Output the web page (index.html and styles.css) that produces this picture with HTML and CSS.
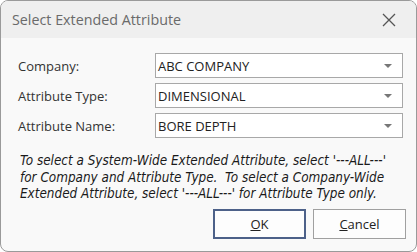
FILE: index.html
```html
<!DOCTYPE html>
<html lang="en">
<head>
    <meta charset="UTF-8">
    <title>Select Extended Attribute</title>
    <link rel="stylesheet" href="styles.css">
</head>
<body>
    <div class="dialog">
        <div class="titlebar">
            <span class="title">Select Extended Attribute</span>
            <span class="close">
                <svg width="14" height="14" viewBox="0 0 14 14"><path d="M1 1 L13 13 M13 1 L1 13" stroke="#555" stroke-width="1.3" fill="none"/></svg>
            </span>
        </div>
        <div class="content">
            <div class="form-row">
                <label>Company:</label>
                <div class="select"><span>ABC COMPANY</span><i class="arrow"></i></div>
            </div>
            <div class="form-row">
                <label>Attribute Type:</label>
                <div class="select"><span>DIMENSIONAL</span><i class="arrow"></i></div>
            </div>
            <div class="form-row">
                <label>Attribute Name:</label>
                <div class="select"><span>BORE DEPTH</span><i class="arrow"></i></div>
            </div>
            <p class="note">To select a System-Wide Extended Attribute, select '---ALL---' for Company and Attribute Type.&nbsp; To select a Company-Wide Extended Attribute, select '---ALL---' for Attribute Type only.</p>
            <div class="buttons">
                <button class="default"><u>O</u>K</button>
                <button><u>C</u>ancel</button>
            </div>
        </div>
    </div>
</body>
</html>
```

FILE: styles.css
```css
body {
    margin: 0;
    background: #ffffff;
    font-family: "Open Sans", "Noto Sans", sans-serif;
    color: #222;
}

.dialog {
    width: 415px;
    height: 250px;
    border: 1px solid #9a9a9a;
    border-radius: 8px;
    background: #f9f9f9;
    overflow: hidden;
}

.titlebar {
    height: 37px;
    background: #efefef;
    display: flex;
    align-items: center;
    justify-content: space-between;
    padding: 0 20px 0 11px;
}

.title {
    font-size: 14.3px;
    color: #6a6a6a;
}

.close {
    display: flex;
}

.content {
    padding: 15px 10px 0 17px;
}

.form-row {
    display: flex;
    align-items: center;
    height: 25px;
    margin-bottom: 5px;
    margin-right: 3px;
}

label {
    width: 137px;
    font-size: 13px;
    color: #333;
}

.select {
    flex: 1;
    height: 23px;
    border: 1px solid #a8a8a8;
    background: #fff;
    display: flex;
    align-items: center;
    justify-content: space-between;
    padding: 0 10px 0 2px;
    font-size: 13px;
    color: #222;
}

.arrow {
    width: 0;
    height: 0;
    border-left: 4px solid transparent;
    border-right: 4px solid transparent;
    border-top: 4px solid #777;
}

.note {
    margin: 15px 0 0 2px;
    font-family: "DejaVu Sans Condensed", "DejaVu Sans", sans-serif;
    font-size: 13.4px;
    line-height: 16.5px;
    font-style: italic;
    color: #1a1a1a;
}

.buttons {
    display: flex;
    justify-content: flex-end;
    gap: 7px;
    margin-top: 6px;
}

button {
    width: 93px;
    height: 30px;
    background: #fdfdfd;
    border: 1px solid #a0a0a0;
    font-family: "Open Sans", "Noto Sans", sans-serif;
    font-size: 13px;
    color: #222;
}

button.default {
    border: 2px solid #4d6189;
}
```
